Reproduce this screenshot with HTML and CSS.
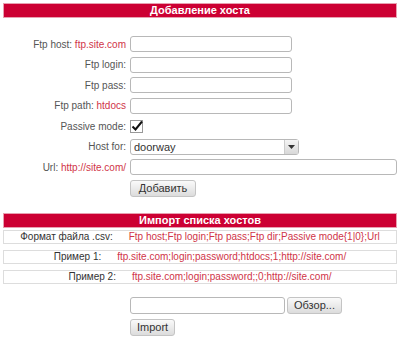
FILE: index.html
```html
<!DOCTYPE html>
<html lang="ru">
<head>
    <meta charset="UTF-8">
    <title>Добавление хоста</title>
    <link rel="stylesheet" href="styles.css">
</head>
<body>
    <div class="page">
        <div class="bar">Добавление хоста</div>

        <form class="host-form">
            <label class="lbl">Ftp host: <span class="hint">ftp.site.com</span></label>
            <div><input type="text" class="field"></div>

            <label class="lbl">Ftp login:</label>
            <div><input type="text" class="field"></div>

            <label class="lbl">Ftp pass:</label>
            <div><input type="text" class="field"></div>

            <label class="lbl">Ftp path: <span class="hint">htdocs</span></label>
            <div><input type="text" class="field"></div>

            <label class="lbl">Passive mode:</label>
            <div class="check">
                <svg width="13" height="13" viewBox="0 0 13 13">
                    <rect x="0.5" y="0.5" width="12" height="12" fill="#fff" stroke="#999"/>
                    <path d="M2.5 6.5 L5.5 9.5 L12 1.5" fill="none" stroke="#111" stroke-width="2"/>
                </svg>
            </div>

            <label class="lbl">Host for:</label>
            <div>
                <div class="select">
                    <span class="select-val">doorway</span>
                    <span class="select-btn">
                        <svg width="7" height="4" viewBox="0 0 7 4"><path d="M0 0 H7 L3.5 4 Z" fill="#333"/></svg>
                    </span>
                </div>
            </div>

            <label class="lbl">Url: <span class="hint">http://site.com/</span></label>
            <div><input type="text" class="field wide"></div>

            <span></span>
            <div><button type="button" class="btn add">Добавить</button></div>
        </form>

        <div class="bar">Импорт списка хостов</div>

        <div class="fmt">
            <span>Формат файла .csv:</span><span class="hint">Ftp host;Ftp login;Ftp pass;Ftp dir;Passive mode{1|0};Url</span>
        </div>
        <div class="fmt">
            <span>Пример 1:</span><span class="hint">ftp.site.com;login;password;htdocs;1;http://site.com/</span>
        </div>
        <div class="fmt">
            <span>Пример 2:</span><span class="hint">ftp.site.com;login;password;;0;http://site.com/</span>
        </div>

        <div class="upload">
            <div class="file-row">
                <input type="text" class="field file">
                <button type="button" class="btn">Обзор...</button>
            </div>
            <div><button type="button" class="btn">Import</button></div>
        </div>
    </div>
</body>
</html>
```

FILE: styles.css
```css
/* Base */
body {
    margin: 0;
    font-family: 'Liberation Sans', Arial, sans-serif;
    font-size: 10px;
    color: #555;
    background: #fff;
}

.page {
    padding: 3px;
}

/* Section bars */
.bar {
    background: #cc0033;
    border: 1px solid #e8a0b0;
    color: #fff;
    font-weight: bold;
    font-size: 11px;
    text-align: center;
    height: 13px;
    line-height: 13px;
}

.hint {
    color: #d03448;
}

/* Add host form */
.host-form {
    display: grid;
    grid-template-columns: 123px 1fr;
    column-gap: 4px;
    row-gap: 4.5px;
    align-items: center;
    margin-top: 18px;
    margin-bottom: 16px;
}

.lbl {
    text-align: right;
    white-space: nowrap;
}

.field {
    box-sizing: border-box;
    width: 162px;
    height: 16px;
    margin: 0;
    padding: 0 3px;
    border: 1px solid #b8b8b8;
    border-radius: 3px;
    background: #fff;
    display: block;
}

.field.wide {
    width: 267px;
}

.check {
    height: 16px;
    display: flex;
    align-items: center;
}

.select {
    box-sizing: border-box;
    width: 169px;
    height: 16px;
    border: 1px solid #b8b8b8;
    border-radius: 3px;
    display: flex;
    align-items: stretch;
    color: #333;
    font-size: 11px;
}

.select-val {
    flex: 1;
    padding-left: 3px;
    line-height: 14px;
}

.select-btn {
    width: 13px;
    border-left: 1px solid #ccc;
    background: linear-gradient(#f4f4f4, #d8d8d8);
    display: flex;
    align-items: center;
    justify-content: center;
}

/* Buttons */
.btn {
    box-sizing: border-box;
    height: 17px;
    padding: 0 6px;
    margin: 0;
    font-family: inherit;
    font-size: 11px;
    color: #333;
    border: 1px solid #c4c4c4;
    border-radius: 3px;
    background: linear-gradient(#fafafa, #dcdcdc);
}

.btn.add {
    width: 66px;
}

/* Import format */
.fmt {
    display: flex;
    justify-content: center;
    gap: 16px;
    margin-top: 2px;
    height: 12px;
    line-height: 12px;
    border: 1px solid #ddd;
    color: #333;
    white-space: nowrap;
}

.fmt + .fmt {
    margin-top: 6px;
}

/* Upload */
.upload {
    margin-top: 13px;
    padding-left: 127px;
    display: flex;
    flex-direction: column;
    gap: 5px;
}

.file-row {
    display: flex;
    gap: 2px;
}

.field.file {
    width: 155px;
    height: 17px;
}
```
